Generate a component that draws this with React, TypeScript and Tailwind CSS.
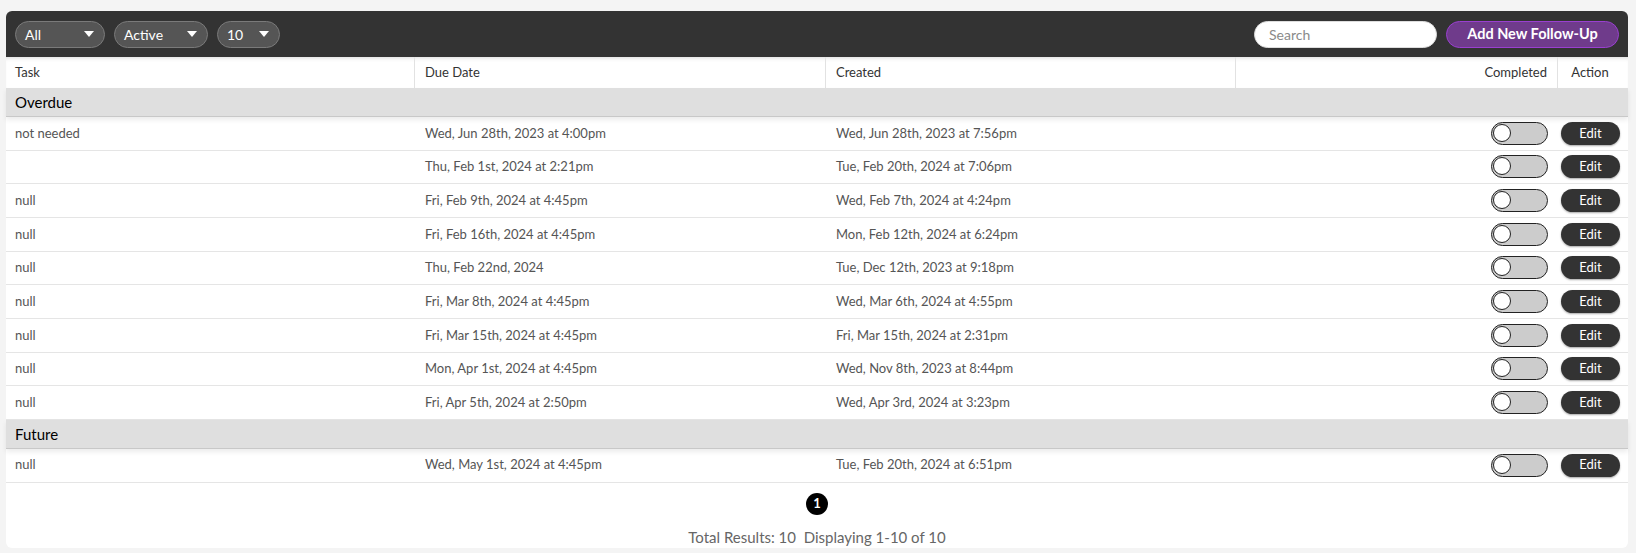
import React from "react";

type Row = { task: string; due: string; created: string };

const overdue: Row[] = [
  { task: "not needed", due: "Wed, Jun 28th, 2023 at 4:00pm", created: "Wed, Jun 28th, 2023 at 7:56pm" },
  { task: "", due: "Thu, Feb 1st, 2024 at 2:21pm", created: "Tue, Feb 20th, 2024 at 7:06pm" },
  { task: "null", due: "Fri, Feb 9th, 2024 at 4:45pm", created: "Wed, Feb 7th, 2024 at 4:24pm" },
  { task: "null", due: "Fri, Feb 16th, 2024 at 4:45pm", created: "Mon, Feb 12th, 2024 at 6:24pm" },
  { task: "null", due: "Thu, Feb 22nd, 2024", created: "Tue, Dec 12th, 2023 at 9:18pm" },
  { task: "null", due: "Fri, Mar 8th, 2024 at 4:45pm", created: "Wed, Mar 6th, 2024 at 4:55pm" },
  { task: "null", due: "Fri, Mar 15th, 2024 at 4:45pm", created: "Fri, Mar 15th, 2024 at 2:31pm" },
  { task: "null", due: "Mon, Apr 1st, 2024 at 4:45pm", created: "Wed, Nov 8th, 2023 at 8:44pm" },
  { task: "null", due: "Fri, Apr 5th, 2024 at 2:50pm", created: "Wed, Apr 3rd, 2024 at 3:23pm" },
];

const future: Row[] = [
  { task: "null", due: "Wed, May 1st, 2024 at 4:45pm", created: "Tue, Feb 20th, 2024 at 6:51pm" },
];

const GRID = "grid grid-cols-[409px_411px_410px_322px_70px]";

function Select({ label, width }: { label: string; width: string }) {
  return (
    <div
      className={`${width} h-[27px] rounded-full bg-[#555555] border border-[#7a7a7a] flex items-center justify-between pl-[9px] pr-[10px] text-white text-[14px]`}
    >
      <span>{label}</span>
      <svg width="10" height="6" viewBox="0 0 10 6">
        <path d="M0 0 L10 0 L5 6 Z" fill="#ffffff" />
      </svg>
    </div>
  );
}

function Toggle() {
  return (
    <div className="w-[57px] h-[23px] rounded-full bg-[#cccccc] border-[1.5px] border-[#222222] relative">
      <div className="absolute left-[1px] top-[1px] w-[18px] h-[18px] rounded-full bg-white border-[1.5px] border-[#222222]" />
    </div>
  );
}

function DataRow({ r }: { r: Row }) {
  return (
    <div className={`${GRID} h-[33.67px] border-b border-[#e5e5e5] text-[13px] text-[#555555] items-center`}>
      <div className="pl-[9px]">{r.task}</div>
      <div className="pl-[10px]">{r.due}</div>
      <div className="pl-[10px]">{r.created}</div>
      <div className="flex justify-end pr-[10px]">
        <Toggle />
      </div>
      <div className="flex justify-start pl-[3px]">
        <div className="w-[59px] h-[23px] rounded-full bg-[#333333] text-white text-[13px] flex items-center justify-center shadow-[0_1px_2px_rgba(0,0,0,0.35)]">
          Edit
        </div>
      </div>
    </div>
  );
}

function GroupRow({ label }: { label: string }) {
  return (
    <div className="h-[29px] bg-[#dfdfdf] border-b border-[#c8c8c8] shadow-[0_3px_5px_rgba(0,0,0,0.08)] flex items-center pl-[9px] text-[15px] text-black relative">
      {label}
    </div>
  );
}

export default function App() {
  return (
    <div
      className="w-[1636px] h-[553px] bg-[#f4f4f4] px-[6px] pt-[11px]"
      style={{ fontFamily: "Lato, 'Noto Sans', sans-serif" }}
    >
      <div className="w-[1622px] h-[537px] bg-white rounded-[6px] flex flex-col">
        <div className="h-[46px] bg-[#333333] rounded-t-[6px] flex items-center justify-between px-[9px]">
          <div className="flex items-center gap-[9px]">
            <Select label="All" width="w-[90px]" />
            <Select label="Active" width="w-[94px]" />
            <Select label="10" width="w-[63px]" />
          </div>
          <div className="flex items-center gap-[9px]">
            <div className="w-[183px] h-[27px] rounded-full bg-white border border-[#dddddd] flex items-center pl-[14px] text-[14px] text-[#8a8a8a]">
              Search
            </div>
            <div className="w-[173px] h-[27px] rounded-full bg-[#6f3b8b] border border-[#9a3fd0] flex items-center justify-center text-white text-[14.5px] font-bold">
              Add New Follow-Up
            </div>
          </div>
        </div>
        <div className={`${GRID} h-[31px] text-[13px] text-[#333333] items-stretch shadow-[inset_0_4px_4px_-3px_rgba(0,0,0,0.15)]`}>
          <div className="pl-[9px] flex items-center border-r border-[#e2e2e2]">Task</div>
          <div className="pl-[10px] flex items-center border-r border-[#e2e2e2]">Due Date</div>
          <div className="pl-[10px] flex items-center border-r border-[#e2e2e2]">Created</div>
          <div className="pr-[10px] flex items-center justify-end border-r border-[#e2e2e2]">Completed</div>
          <div className="flex items-center justify-center pr-[6px]">Action</div>
        </div>
        <GroupRow label="Overdue" />
        {overdue.map((r, i) => (
          <DataRow key={i} r={r} />
        ))}
        <GroupRow label="Future" />
        {future.map((r, i) => (
          <DataRow key={i} r={r} />
        ))}
        <div className="flex flex-col items-center pt-[10px]">
          <div className="w-[22px] h-[22px] rounded-full bg-black text-white text-[13px] font-bold flex items-center justify-center">
            1
          </div>
          <div className="mt-[11px] text-[15px] text-[#666666]">
            Total Results: 10&nbsp;&nbsp;Displaying 1-10 of 10
          </div>
        </div>
      </div>
    </div>
  );
}
